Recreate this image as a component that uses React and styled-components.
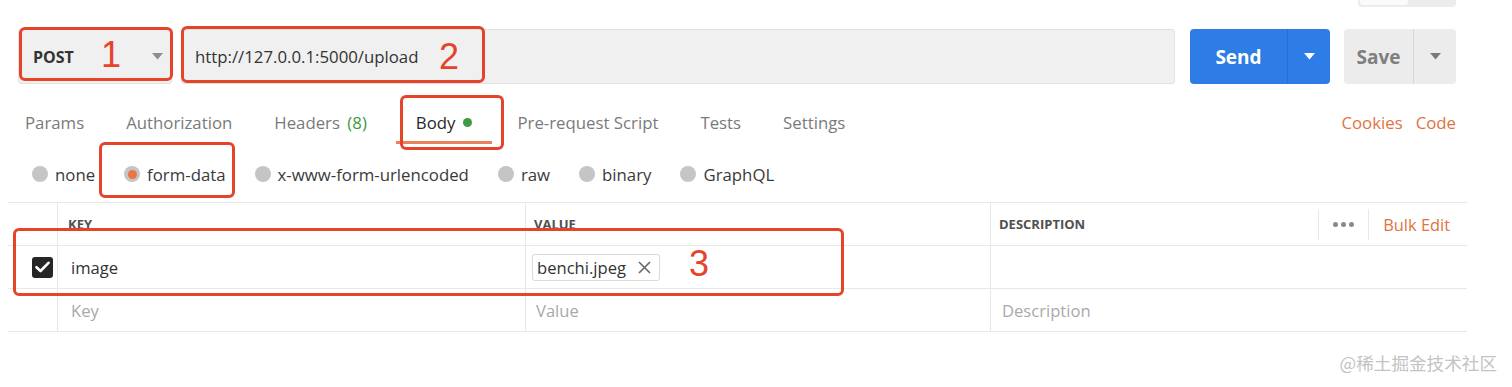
import React from "react";
import styled, { createGlobalStyle } from "styled-components";

const GlobalStyle = createGlobalStyle`
  body {
    margin: 0;
    background: #fff;
    font-family: "Open Sans", "Noto Sans", sans-serif;
  }
`;

const Page = styled.div`
  position: relative;
  width: 1512px;
  height: 387px;
  overflow: hidden;
  background: #fff;
`;

const TopStrip = styled.div`
  height: 7px;
  display: flex;
  justify-content: flex-end;
  padding-right: 56px;
`;
const TogglePiece = styled.div`
  width: 98px;
  height: 7px;
  display: flex;
  background: #ececec;
  border-radius: 0 0 4px 4px;
  overflow: hidden;
  & > span {
    width: 48px;
    margin: 0 0 2px 2px;
    background: #fafafa;
    border-radius: 0 0 3px 3px;
  }
`;

// request bar
const RequestBar = styled.div`
  margin-top: 22px;
  padding: 0 56px 0 18px;
  display: flex;
  align-items: stretch;
  height: 55px;
`;
const MethodBox = styled.div`
  width: 154px;
  box-sizing: border-box;
  display: flex;
  align-items: center;
  justify-content: space-between;
  padding: 0 8px 0 14px;
  background: #f0f0f0;
  border: 1px solid #e3e3e3;
  border-radius: 3px;
  font-weight: 700;
  font-size: 16px;
  color: #333;
`;
const UrlBox = styled.div`
  flex: 1;
  margin-left: 9px;
  display: flex;
  align-items: center;
  padding-left: 13px;
  background: #f0f0f0;
  border: 1px solid #e1e1e1;
  border-radius: 3px;
  font-size: 16.8px;
  color: #333;
`;
const SplitButton = styled.div`
  display: flex;
  margin-left: ${(p) => p.$gap}px;
  border-radius: 4px;
  overflow: hidden;
  background: ${(p) => (p.$primary ? "#2e7de6" : "#ececec")};
  color: ${(p) => (p.$primary ? "#fff" : "#7f7f7f")};
`;
const SplitMain = styled.div`
  width: ${(p) => p.$w}px;
  display: flex;
  align-items: center;
  justify-content: center;
  font-weight: 700;
  font-size: 19px;
`;
const SplitArrow = styled.div`
  width: 42px;
  display: flex;
  align-items: center;
  justify-content: center;
  border-left: 1px solid ${(p) => (p.$primary ? "#2a6fcf" : "#d6d6d6")};
`;

const Caret = ({ color, w = 11 }) => (
  <svg width={w} height="7" viewBox="0 0 11 7">
    <path d="M0 0 H11 L5.5 6.5 Z" fill={color} />
  </svg>
);

// tabs
const TabsRow = styled.div`
  margin-top: 16px;
  padding: 0 56px 0 8px;
  display: flex;
  align-items: stretch;
  height: 44px;
  gap: 8px;
`;
const Tab = styled.div`
  position: relative;
  padding: ${(p) => (p.$active ? "0 20px" : "0 17px")};
  margin-left: ${(p) => (p.$active ? 4 : 0)}px;
  display: flex;
  align-items: center;
  gap: 8px;
  font-size: 16.8px;
  color: ${(p) => (p.$active ? "#282828" : "#7a7a7a")};
  ${(p) =>
    p.$active &&
    `&::after {
      content: "";
      position: absolute;
      left: 0;
      right: 0;
      bottom: 0;
      height: 3px;
      background: #e9825a;
    }`}
`;
const Count = styled.span`
  margin-left: 3px;
  color: #3e9a3e;
`;
const Dot = styled.span`
  width: 9px;
  height: 9px;
  border-radius: 50%;
  background: #3d9a45;
`;
const TabLinks = styled.div`
  margin-left: auto;
  display: flex;
  align-items: center;
  gap: 13px;
  font-size: 16.8px;
  color: #e0733f;
`;

// body type radios
const RadioRow = styled.div`
  margin-top: 8px;
  height: 44px;
  padding-left: 32px;
  display: flex;
  align-items: center;
  gap: 29px;
`;
const RadioItem = styled.label`
  display: flex;
  align-items: center;
  gap: 7px;
  font-size: 16.8px;
  color: #3a3a3a;
`;
const RadioCircle = styled.span`
  width: 16px;
  height: 16px;
  border-radius: 50%;
  background: #c5c5c5;
  display: flex;
  align-items: center;
  justify-content: center;
  &::after {
    content: "";
    width: 9px;
    height: 9px;
    border-radius: 50%;
    background: ${(p) => (p.$checked ? "#ea7643" : "transparent")};
  }
`;

// table
const Table = styled.div`
  margin: 6px 0 0 8px;
  width: 1459px;
  display: grid;
  grid-template-columns: 49px 468px 465px 1fr;
  border-top: 1px solid #e8e8e8;
`;
const Cell = styled.div`
  height: 43px;
  box-sizing: border-box;
  display: flex;
  align-items: center;
  padding-left: ${(p) => p.$pad ?? 13}px;
  border-bottom: 1px solid #e8e8e8;
  border-left: ${(p) => (p.$first ? "none" : "1px solid #e8e8e8")};
  font-size: 16.6px;
  color: ${(p) => (p.$placeholder ? "#a9a9a9" : "#333")};
`;
const HeadText = styled.span`
  font-weight: 700;
  font-size: 13px;
  color: #505050;
  text-transform: uppercase;
`;
const HeadTools = styled.div`
  margin-left: auto;
  display: flex;
  align-items: center;
  height: 31px;
  padding-right: 17px;
`;
const Dots = styled.div`
  height: 100%;
  display: flex;
  align-items: center;
  gap: 3px;
  padding: 0 14px;
  border-left: 1px solid #e8e8e8;
  border-right: 1px solid #e8e8e8;
  & > i {
    width: 5px;
    height: 5px;
    border-radius: 50%;
    background: #8a8a8a;
  }
`;
const BulkEdit = styled.span`
  margin-left: 14px;
  font-size: 16.4px;
  color: #e0733f;
`;
const CheckBox = styled.span`
  width: 21px;
  height: 21px;
  border-radius: 3px;
  background: #262626;
  display: flex;
  align-items: center;
  justify-content: center;
`;
const FileChip = styled.span`
  height: 27px;
  box-sizing: border-box;
  display: flex;
  align-items: center;
  gap: 12px;
  padding: 0 8px 0 4px;
  border: 1px solid #dadada;
  border-radius: 3px;
  font-size: 16.6px;
  color: #333;
`;

const Watermark = styled.div`
  margin-top: 18px;
  padding-right: 15px;
  text-align: right;
  font-family: "Noto Sans CJK SC", sans-serif;
  font-size: 17.6px;
  color: #c3c3c3;
`;

// red annotations drawn on top of the screenshot
const Highlight = styled.div`
  position: absolute;
  left: ${(p) => p.$x}px;
  top: ${(p) => p.$y}px;
  width: ${(p) => p.$w}px;
  height: ${(p) => p.$h}px;
  box-sizing: border-box;
  border: 3px solid #e6432b;
  border-radius: 6px;
  pointer-events: none;
`;
const Mark = styled.span`
  position: absolute;
  left: ${(p) => p.$x}px;
  top: ${(p) => p.$y}px;
  font-family: "Liberation Sans", Arial, sans-serif;
  font-size: 36px;
  line-height: 1;
  color: #e6432b;
`;

const tabs = ["Params", "Authorization", "Headers", "Body", "Pre-request Script", "Tests", "Settings"];
const radios = ["none", "form-data", "x-www-form-urlencoded", "raw", "binary", "GraphQL"];

export default function App() {
  return (
    <Page>
      <GlobalStyle />
      <TopStrip>
        <TogglePiece>
          <span />
        </TogglePiece>
      </TopStrip>

      <RequestBar>
        <MethodBox>
          POST
          <Caret color="#8c8c8c" />
        </MethodBox>
        <UrlBox>http://127.0.0.1:5000/upload</UrlBox>
        <SplitButton $primary $gap={15}>
          <SplitMain $w={97}>Send</SplitMain>
          <SplitArrow $primary>
            <Caret color="#fff" />
          </SplitArrow>
        </SplitButton>
        <SplitButton $gap={14}>
          <SplitMain $w={69}>Save</SplitMain>
          <SplitArrow>
            <Caret color="#7a7a7a" />
          </SplitArrow>
        </SplitButton>
      </RequestBar>

      <TabsRow>
        {tabs.map((t) => (
          <Tab key={t} $active={t === "Body"}>
            {t === "Headers" ? (
              <span>
                Headers <Count>(8)</Count>
              </span>
            ) : (
              t
            )}
            {t === "Body" && <Dot />}
          </Tab>
        ))}
        <TabLinks>
          <span>Cookies</span>
          <span>Code</span>
        </TabLinks>
      </TabsRow>

      <RadioRow>
        {radios.map((r) => (
          <RadioItem key={r}>
            <RadioCircle $checked={r === "form-data"} />
            {r}
          </RadioItem>
        ))}
      </RadioRow>

      <Table>
        <Cell $first />
        <Cell $pad={10}>
          <HeadText>Key</HeadText>
        </Cell>
        <Cell $pad={8}>
          <HeadText>Value</HeadText>
        </Cell>
        <Cell $pad={8}>
          <HeadText>Description</HeadText>
          <HeadTools>
            <Dots>
              <i />
              <i />
              <i />
            </Dots>
            <BulkEdit>Bulk Edit</BulkEdit>
          </HeadTools>
        </Cell>

        <Cell $first $pad={24}>
          <CheckBox>
            <svg width="15" height="12" viewBox="0 0 15 12">
              <path d="M1.5 6.2 L5.5 10 L13.5 1.8" fill="none" stroke="#fff" strokeWidth="2.6" strokeLinecap="round" strokeLinejoin="round" />
            </svg>
          </CheckBox>
        </Cell>
        <Cell>image</Cell>
        <Cell $pad={6}>
          <FileChip>
            benchi.jpeg
            <svg width="13" height="13" viewBox="0 0 13 13">
              <path d="M1 1 L12 12 M12 1 L1 12" stroke="#666" strokeWidth="1.6" />
            </svg>
          </FileChip>
        </Cell>
        <Cell />

        <Cell $first />
        <Cell $placeholder>Key</Cell>
        <Cell $placeholder $pad={10}>Value</Cell>
        <Cell $placeholder $pad={11}>Description</Cell>
      </Table>

      <Watermark>@稀土掘金技术社区</Watermark>

      <Highlight $x={19} $y={27} $w={154} $h={54} />
      <Highlight $x={181} $y={26} $w={304} $h={57} />
      <Highlight $x={400} $y={95} $w={104} $h={55} />
      <Highlight $x={99} $y={142} $w={136} $h={56} />
      <Highlight $x={13} $y={228} $w={831} $h={68} />
      <Mark $x={101} $y={37}>1</Mark>
      <Mark $x={439} $y={39}>2</Mark>
      <Mark $x={689} $y={246}>3</Mark>
    </Page>
  );
}
